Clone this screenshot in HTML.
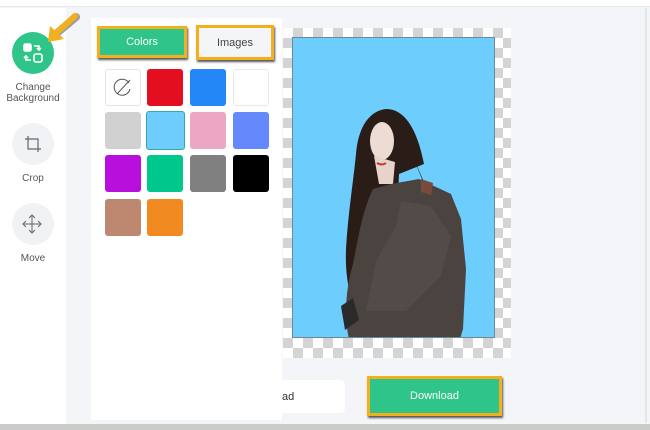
<!DOCTYPE html>
<html><head><meta charset="utf-8"><style>
*{margin:0;padding:0;box-sizing:border-box}
body{width:650px;height:430px;overflow:hidden;background:#f3f5f8;font-family:"Liberation Sans",sans-serif;position:relative}
.abs{position:absolute}
.top{left:0;top:0;width:650px;height:7px;background:#fff;border-bottom:1px solid #e6e8ec}
.side{left:0;top:8px;width:66px;height:422px;background:#fff}
.ic{width:42px;height:42px;border-radius:50%;background:#f1f2f5;left:12px}
.lbl{font-size:10px;color:#555;text-align:center;width:66px;left:0;line-height:11px}
.panel{left:91px;top:18px;width:191px;height:402px;background:#fff}
.sw{width:36px;height:37px;border-radius:3px}
.checker{left:283px;top:28px;width:228px;height:330px;background-color:#fff;background-image:linear-gradient(45deg,#d4d4d4 25%,transparent 25%,transparent 75%,#d4d4d4 75%),linear-gradient(45deg,#d4d4d4 25%,transparent 25%,transparent 75%,#d4d4d4 75%);background-size:20px 20px;background-position:0 0,10px 10px}
.btn{font-size:11px;display:flex;align-items:center;justify-content:center}
</style></head><body>
<div class="abs top"></div>
<div class="abs side"></div>
<div class="abs" style="left:645px;top:8px;width:2px;height:415px;background:#dfe9e4"></div>
<div class="abs" style="left:0;top:424px;width:650px;height:6px;background:#c9ccc9"></div>

<div class="abs ic" style="top:32px;background:#2fc48a"></div>
<svg class="abs" style="left:22px;top:42px" width="22" height="22" viewBox="0 0 22 22" fill="none" stroke="#fff" stroke-width="1.6"><rect x="2" y="2" width="7" height="7" rx="1.5" fill="#fff"/><rect x="12" y="12" width="8" height="8" rx="2"/><path d="M12 4h5v4M15 6l2 2 2-2M9 18H4v-4M2 16l2-2 2 2"/></svg>
<svg class="abs" style="left:44px;top:12px" width="36" height="34" viewBox="0 0 36 34"><path d="M32 5 L12 22" stroke="#333" stroke-width="8" stroke-linecap="round" opacity=".45"/><path d="M31 4 L12 21" stroke="#f2b01e" stroke-width="6" stroke-linecap="round"/><path d="M4 30 L6 14 L20 27 Z" fill="#f2b01e"/></svg>
<div class="abs lbl" style="top:82px">Change<br>Background</div>

<div class="abs ic" style="top:123px"></div>
<svg class="abs" style="left:24px;top:135px" width="18" height="18" viewBox="0 0 18 18" fill="none" stroke="#666" stroke-width="1.2"><path d="M4 1v13h13M1 4h13v13"/></svg>
<div class="abs lbl" style="top:173px">Crop</div>
<div class="abs ic" style="top:203px"></div>
<svg class="abs" style="left:22px;top:214px" width="20" height="20" viewBox="0 0 20 20" fill="none" stroke="#666" stroke-width="1"><path d="M10 1v18M1 10h18M7 4l3-3 3 3M7 16l3 3 3-3M4 7l-3 3 3 3M16 7l3 3-3 3"/></svg>
<div class="abs lbl" style="top:253px">Move</div>

<div class="abs panel"></div>
<div class="abs btn" style="left:97px;top:26px;width:90px;height:32px;background:#2fc48a;color:#fff;border:3px solid #f2b01e;box-shadow:1px 2px 2px #555">Colors</div>
<div class="abs btn" style="left:196px;top:25px;width:78px;height:35px;background:#f4f5f8;color:#444;border:3px solid #f2b01e;box-shadow:1px 2px 2px #555">Images</div>

<div class="abs sw" style="left:105px;top:69px;border:1px solid #e4e4e4;background:#fff"></div>
<svg class="abs" style="left:113px;top:77px" width="20" height="20" viewBox="0 0 20 20" fill="none" stroke="#555" stroke-width="1"><path d="M16 6A8 8 0 1 0 17 12"/><path d="M4 17L17 3"/></svg>
<div class="abs sw" style="left:147px;top:69px;background:#e30e20"></div>
<div class="abs sw" style="left:190px;top:69px;background:#2387f8"></div>
<div class="abs sw" style="left:233px;top:69px;background:#fff;border:1px solid #e8e8e8"></div>
<div class="abs sw" style="left:105px;top:112px;background:#d1d1d1"></div>
<div class="abs sw" style="left:146px;top:111px;width:39px;height:39px;background:#6fcdfd;border:1px solid #3aa"></div>
<div class="abs sw" style="left:190px;top:112px;background:#eca8c2"></div>
<div class="abs sw" style="left:233px;top:112px;background:#6489fc"></div>
<div class="abs sw" style="left:105px;top:155px;background:#b90fdc"></div>
<div class="abs sw" style="left:147px;top:155px;background:#00c88c"></div>
<div class="abs sw" style="left:190px;top:155px;background:#808080"></div>
<div class="abs sw" style="left:233px;top:155px;background:#000"></div>
<div class="abs sw" style="left:105px;top:199px;background:#be8870"></div>
<div class="abs sw" style="left:147px;top:199px;background:#f28a22"></div>

<div class="abs checker"></div>
<div class="abs" style="left:292px;top:37px;width:203px;height:301px;background:#6dcdfd;border:1px solid #6a8a9a;overflow:hidden">
<svg width="203" height="301" viewBox="292 37 203 301" style="display:block">
<path d="M385 108c-18 2-28 20-30 45-3 30-8 60-10 95-1 25 3 45 8 55l40-10 5-120 25-10c-5-25-15-55-38-55z" fill="#2a1c17"/>
<path d="M395 115c10 20 20 50 30 70l20 15 10 10-25-10z" fill="#2a1c17"/>
<ellipse cx="381" cy="140" rx="12" ry="19" fill="#ecdcd3"/>
<path d="M373 155l5 28h14l2-22z" fill="#e6d3ca"/>
<path d="M372 188l18-5 28-5 32 15 10 25 5 50-3 60-3 10H348c-6-25-2-55 4-75 6-30 10-55 20-75z" fill="#4b4340"/>
<path d="M400 200l30 5 20 30-10 40-35 35h-40l10-50 20-35z" fill="#5b524e" opacity=".55"/>
<path d="M420 178l12 4-2 12-10-3z" fill="#7a4a3a"/>
<path d="M376 162q5 3 9 0" stroke="#c33" stroke-width="2" fill="none"/>
<path d="M340 305l12-8 6 22-14 10z" fill="#2b2a2a"/>
</svg></div>

<div class="abs btn" style="left:240px;top:380px;width:105px;height:33px;background:#fff;border-radius:5px;color:#333;justify-content:flex-start;padding-left:42px">ad</div>
<div class="abs" style="left:91px;top:380px;width:191px;height:40px;background:#fff"></div>
<div class="abs btn" style="left:367px;top:376px;width:135px;height:40px;background:#2fc48a;color:#fff;border:3px solid #f2b01e;box-shadow:1px 2px 2px #555">Download</div>
</body></html>
